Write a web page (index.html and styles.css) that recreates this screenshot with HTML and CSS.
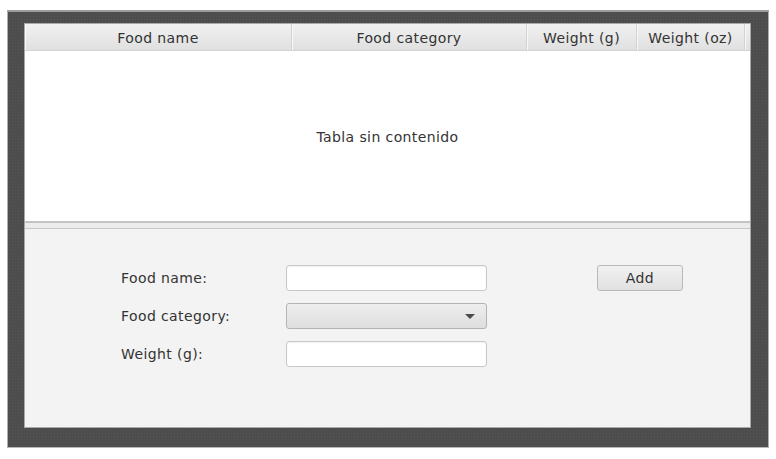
FILE: index.html
```html
<!DOCTYPE html>
<html>
<head>
<meta charset="utf-8">
<link rel="stylesheet" href="styles.css">
</head>
<body>
<div class="frame">
  <div class="panel">
    <div class="table">
      <div class="thead">
        <div class="th c1">Food name</div>
        <div class="th c2">Food category</div>
        <div class="th c3">Weight (g)</div>
        <div class="th c4">Weight (oz)</div>
        <div class="th filler"></div>
      </div>
      <div class="tbody">Tabla sin contenido</div>
    </div>
    <div class="divider"></div>
    <div class="form">
      <div class="grid">
        <label class="lbl">Food name:</label>
        <div class="field"></div>
        <div class="spacer"></div>
        <div class="btn">Add</div>
        <label class="lbl">Food category:</label>
        <div class="combo"><span class="arrow"></span></div>
        <div class="spacer"></div>
        <div></div>
        <label class="lbl">Weight (g):</label>
        <div class="field"></div>
        <div class="spacer"></div>
        <div></div>
      </div>
    </div>
  </div>
</div>
</body>
</html>
```

FILE: styles.css
```css
html, body {
  margin: 0;
  padding: 0;
  background: #ffffff;
}
body {
  font-family: "DejaVu Sans", Verdana, sans-serif;
  font-size: 14px;
  letter-spacing: 0.4px;
  color: #333333;
}
.frame {
  margin: 10px 0 0 7px;
  width: 762px;
  height: 438px;
  box-sizing: border-box;
  background-color: #4d4d4d;
  background-image: radial-gradient(#555555 0.6px, transparent 0.8px);
  background-size: 3px 3px;
  border-top: 2px solid #9d9d9d;
  border-left: 1px solid #b0b0b0;
  border-right: 1px solid #b0b0b0;
  border-bottom: 1px solid #b8b8b8;
  padding: 11px 17px 19px 16px;
}
.panel {
  width: 727px;
  height: 405px;
  box-sizing: border-box;
  border: 1px solid #a9a9a9;
  background: #f3f3f3;
  display: flex;
  flex-direction: column;
}
.table {
  background: #ffffff;
  display: flex;
  flex-direction: column;
}
.thead {
  display: flex;
  height: 27px;
  box-sizing: border-box;
  border-bottom: 1px solid #d4d4d4;
  background: linear-gradient(#f1f1f1, #e0e0e0);
}
.th {
  display: flex;
  align-items: center;
  justify-content: center;
  box-sizing: border-box;
  border-right: 1px solid #d2d2d2;
  box-shadow: inset 1px 0 0 #f8f8f8;
  padding-top: 1px;
}
.c1 { width: 267px; }
.c2 { width: 235px; }
.c3 { width: 110px; }
.c4 { width: 108px; }
.filler { flex: 1; border-right: none; }
.tbody {
  height: 170px;
  box-sizing: border-box;
  display: flex;
  align-items: center;
  justify-content: center;
  padding-top: 1px;
}
.divider {
  height: 8px;
  box-sizing: border-box;
  border-top: 2px solid #c4c4c4;
  border-bottom: 1px solid #c9c9c9;
  background: #ececec;
}
.form {
  flex: 1;
  padding: 36px 0 0 96px;
}
.grid {
  display: grid;
  grid-template-columns: 165px 201px 110px 86px;
  grid-template-rows: 26px 26px 26px;
  row-gap: 12px;
  align-items: center;
}
.lbl {
  display: block;
}
.field {
  height: 26px;
  box-sizing: border-box;
  border: 1px solid #c8c8c8;
  border-radius: 3px;
  background: #ffffff;
  box-shadow: inset 0 1px 2px rgba(0,0,0,0.06);
}
.combo {
  height: 26px;
  box-sizing: border-box;
  border: 1px solid #b4b4b4;
  border-radius: 3px;
  background: linear-gradient(#eeeeee, #dedede);
  display: flex;
  align-items: center;
  justify-content: flex-end;
  padding-right: 11px;
}
.arrow {
  width: 0;
  height: 0;
  border-left: 5px solid transparent;
  border-right: 5px solid transparent;
  border-top: 5px solid #4a4a4a;
}
.btn {
  height: 26px;
  box-sizing: border-box;
  border: 1px solid #b9b9b9;
  border-radius: 3px;
  background: linear-gradient(#f1f1f1, #e1e1e1);
  display: flex;
  align-items: center;
  justify-content: center;
  padding-bottom: 1px;
}
```
